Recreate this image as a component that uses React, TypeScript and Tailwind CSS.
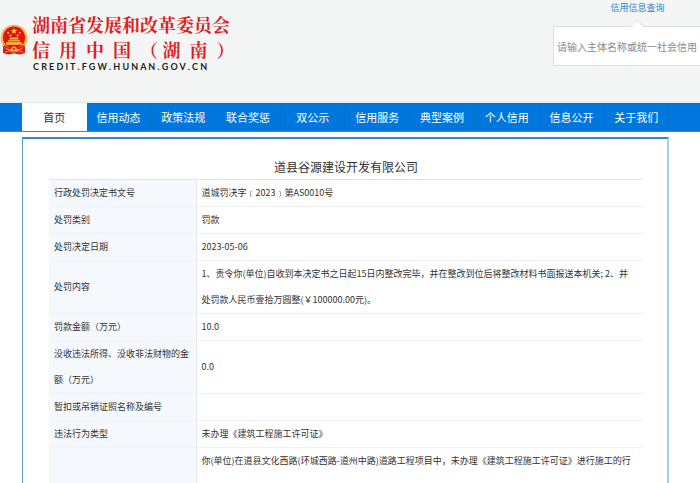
const navItems = [
  '首页',
  '信用动态',
  '政策法规',
  '联合奖惩',
  '双公示',
  '信用服务',
  '典型案例',
  '个人信用',
  '信息公开',
  '关于我们',
];

const rows = [
  { label: '行政处罚决定书文号', value: '道城罚决字﹝2023﹞第AS0010号' },
  { label: '处罚类别', value: '罚款' },
  { label: '处罚决定日期', value: '2023-05-06' },
  {
    label: '处罚内容',
    value:
      '1、责令你(单位)自收到本决定书之日起15日内整改完毕，并在整改到位后将整改材料书面报送本机关; 2、并处罚款人民币壹拾万圆整(￥100000.00元)。',
  },
  { label: '罚款金额（万元）', value: '10.0' },
  { label: '没收违法所得、没收非法财物的金额（万元）', value: '0.0' },
  { label: '暂扣或吊销证照名称及编号', value: '' },
  { label: '违法行为类型', value: '未办理《建筑工程施工许可证》' },
  {
    label: '',
    value: '你(单位)在道县文化西路(环城西路-道州中路)道路工程项目中，未办理《建筑工程施工许可证》进行施工的行',
  },
];

const Emblem = () => (
  <svg viewBox="0 0 28 32" className="w-7 h-8 shrink-0" aria-hidden="true">
    <path d="M3 20 L3 29 L8 30.5 L14 29.5 L20 30.5 L25 29 L25 20 Z" fill="#dd1a1c" />
    <circle cx="14" cy="14" r="13.3" fill="#efb03c" />
    <circle cx="14" cy="14" r="12.2" fill="none" stroke="#f8d25a" strokeWidth="1" strokeDasharray="2 1" />
    <circle cx="14" cy="13.6" r="11" fill="#e60f18" />
    <path d="M14 4l.9 2.1h2.3l-1.8 1.4.7 2.2-2.1-1.3-2.1 1.3.7-2.2-1.8-1.4h2.3z" fill="#fbd84a" />
    <g fill="#fbd84a">
      <circle cx="8.2" cy="8.8" r="1" />
      <circle cx="10.4" cy="11.4" r="1" />
      <circle cx="17.6" cy="11.4" r="1" />
      <circle cx="19.8" cy="8.8" r="1" />
    </g>
    <path d="M9.5 14.6l1-1.2h7l1 1.2v1h-9zM8 16.2h12v1.3H8zM6 18.2h16v2.6H6z" fill="#f8c63e" />
    <path d="M3 20.5 L10 24.2 M25 20.5 L18 24.2" stroke="#f3a53a" strokeWidth="1.2" />
    <path d="M4 22 Q9 25 11.5 24.4 M24 22 Q19 25 16.5 24.4" fill="none" stroke="#dd1a1c" strokeWidth="1.6" />
    <circle cx="14" cy="24.8" r="2.5" fill="#f6b53c" />
    <circle cx="14" cy="24.8" r="1.1" fill="#dd1a1c" />
    <path d="M5 28 Q10 26 14 28.4 Q18 26 23 28" fill="none" stroke="#f3923a" strokeWidth=".8" />
  </svg>
);

const Header = () => (
  <header className="flex justify-between h-[103px] bg-[#f4f6f6] border-b border-[#dbe9f3] overflow-hidden">
    <div className="flex items-start pt-3">
      <div className="pt-3">
        <Emblem />
      </div>
      <div className="pl-1 whitespace-pre font-bold">
        <h1 className="font-['Noto_Serif_CJK_SC','Liberation_Serif',serif] text-[18px] leading-[25px] text-[#dd1f1f]">
          湖南省发展和改革委员会
        </h1>
        <p className="font-['Noto_Serif_CJK_SC','Liberation_Serif',serif] text-[18px] leading-[25px] text-[#dd1f1f]">
          {'信  用  中  国  （ 湖  南  ）'}
        </p>
        <p className="pl-px font-['Lato',sans-serif] text-[9px] leading-[10px] text-[#222]">
          C R E D I T . F G W . H U N A N . G O V . C N
        </p>
      </div>
    </div>

    {/* 信用信息查询 */}
    <form className="w-[147px] shrink-0">
      <div className="flex justify-center pl-[22px]">
        <a href="#query" className="text-[9px] leading-[16px] text-[#2f7fc9]">
          信用信息查询
        </a>
      </div>
      <div className="relative mt-[10px]">
        <svg viewBox="0 0 14 7" className="absolute left-[77px] -top-[6px] w-[14px] h-[7px]" aria-hidden="true">
          <path d="M0 7 L7 .5 L14 7" fill="#fff" stroke="#dcdfdf" />
        </svg>
        <input
          type="text"
          aria-label="信用信息查询"
          placeholder="请输入主体名称或统一社会信用"
          className="block w-full h-10 pl-[3px] bg-white border border-r-0 border-[#dcdfdf] text-[10px] placeholder:text-[#8a8a8a] outline-none"
        />
      </div>
    </form>
  </header>
);

const Nav = () => (
  <nav className="pl-[22px] pr-[31px] bg-[#0077dd] border-b border-[#2b8de0]">
    <ul className="grid grid-cols-10">
      {navItems.map((item, i) => (
        <li key={item}>
          <a
            href="#"
            className={
              i === 0
                ? 'block bg-white text-[#333] text-center text-[11px] leading-[28px]'
                : 'block text-white text-center text-[11px] leading-[28px] border-r border-[#0a70cc]'
            }
          >
            {item}
          </a>
        </li>
      ))}
    </ul>
  </nav>
);

const Detail = () => (
  <main className="mt-[5px] ml-[22px] mr-[31px] pl-[26px] pr-[24px] border-t-2 border-l border-r-2 border-t-[#3b86c8] border-l-[#5c9fc9] border-r-[#a9cdf0]">
    <h2 className="pt-[18px] pb-[2px] text-center text-[12px] leading-[20px] text-[#333]">
      道县谷源建设开发有限公司
    </h2>
    <table className="w-full table-fixed border-collapse text-[9px] leading-[26px] text-[#333]">
      <tbody>
        {rows.map((row) => (
          <tr
            key={row.value + row.label}
            className="border-t border-[#eff3f5] first:border-[#d9e6ec] last:h-[53px] align-top"
          >
            <th
              scope="row"
              className="w-[147px] pl-[5px] pr-1 bg-[#f5f9fe] border-r border-[#e3ebf1] text-left align-middle font-normal"
            >
              {row.label}
            </th>
            <td className={row.label ? 'pl-[5px] pr-2 h-[27px] align-middle' : 'pl-[5px] pr-2'}>{row.value}</td>
          </tr>
        ))}
      </tbody>
    </table>
  </main>
);

const App = () => {
  return (
    <div
      lang="zh-CN"
      className="h-screen overflow-hidden bg-white font-['Noto_Sans_CJK_SC',sans-serif]"
    >
      <Header />
      <Nav />
      <Detail />
    </div>
  );
};

export default App;
